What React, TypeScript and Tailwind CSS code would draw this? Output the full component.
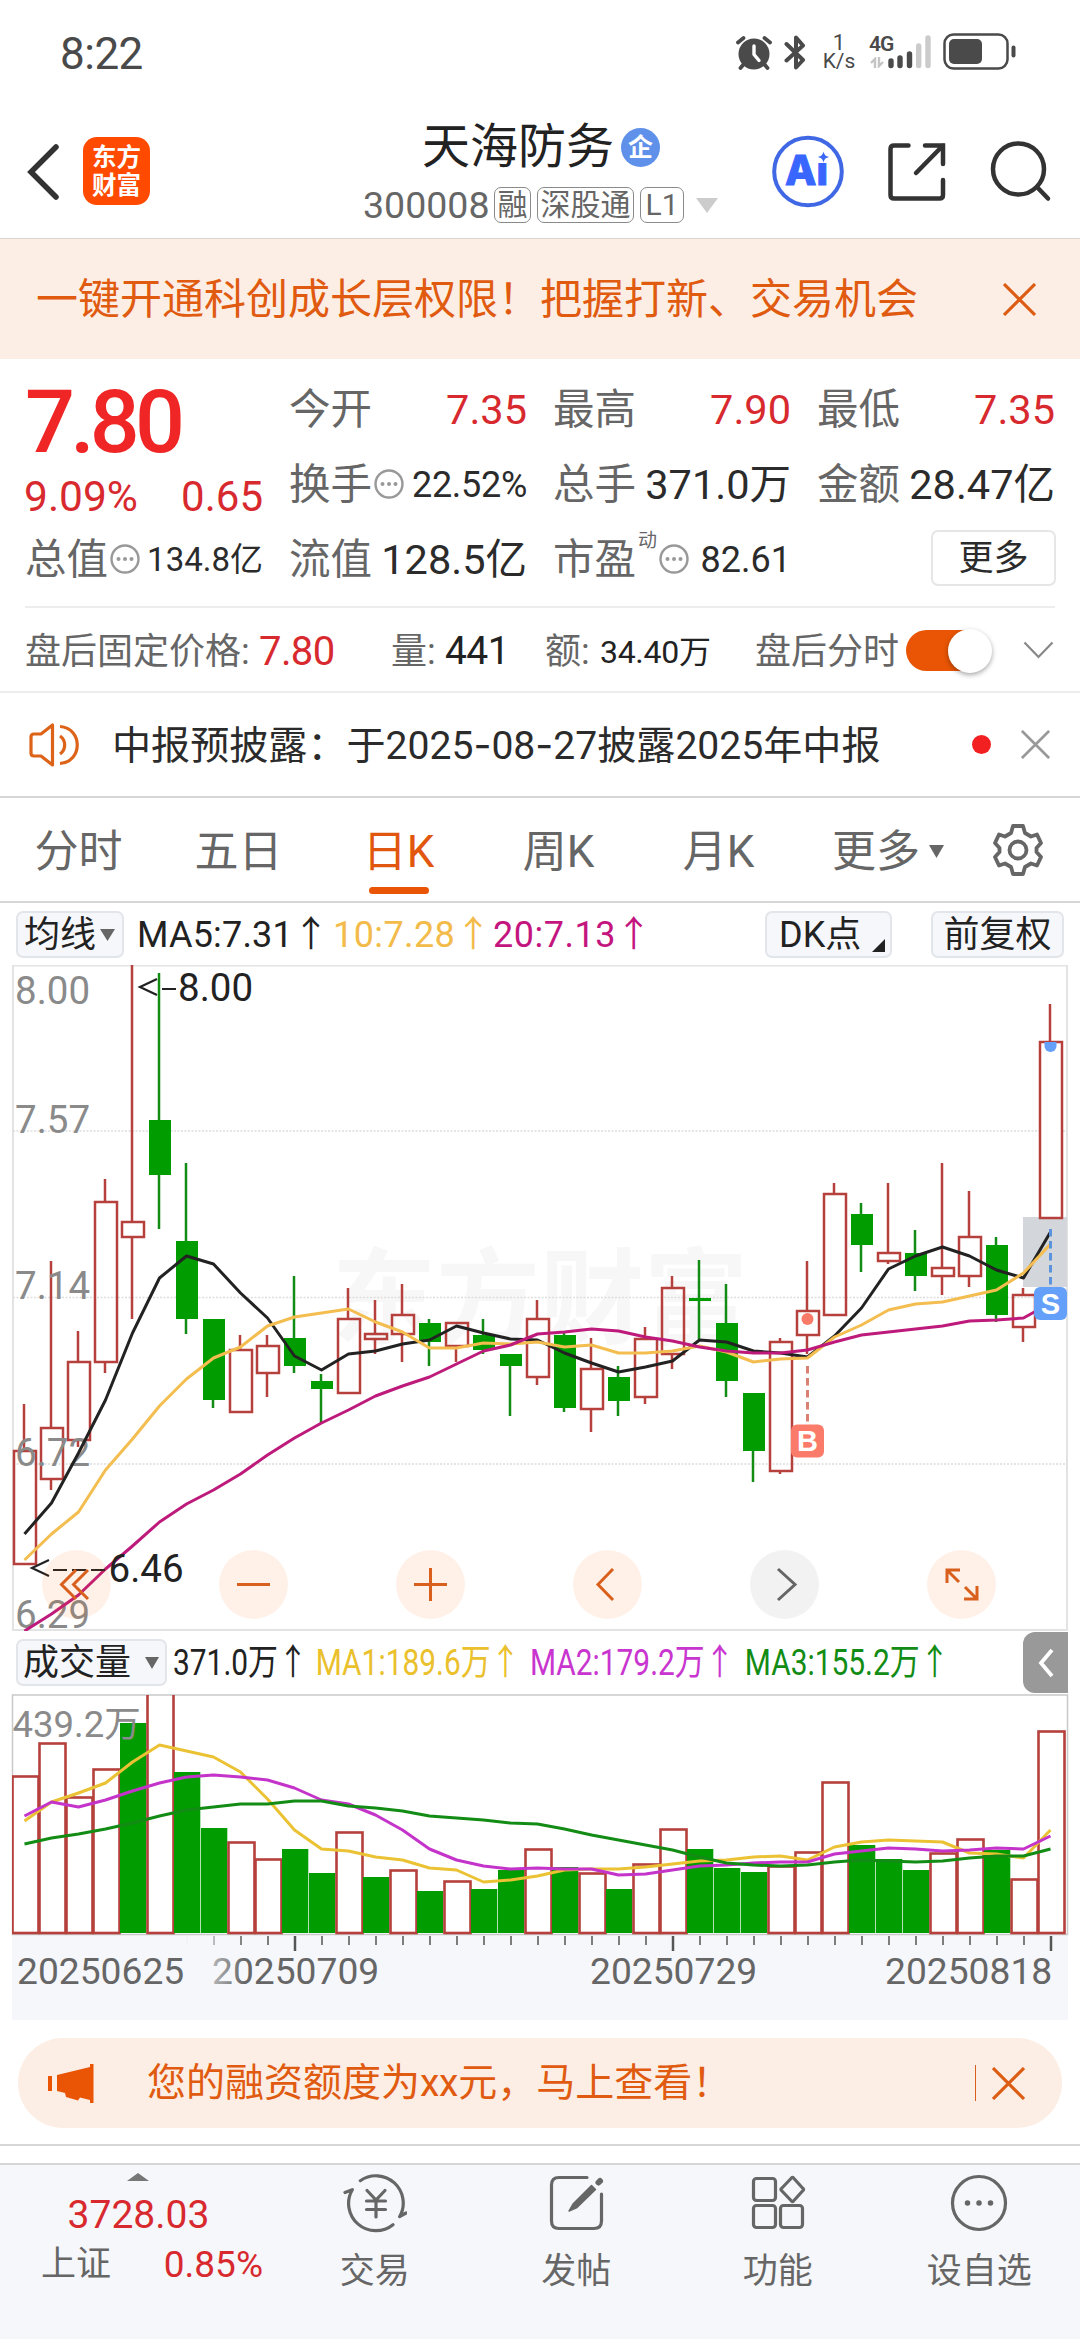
import type { ReactNode } from "react";

const STEP = 27;
const FIRST_X = 24;
const cx = (i: number) => FIRST_X + STEP * i;

// [up, high, bodyTop, bodyBottom, low]
const CANDLES: [number, number, number, number, number][] = [
  [1, 1405, 1452, 1565, 1565],
  [1, 1262, 1429, 1480, 1491],
  [1, 1332, 1363, 1441, 1448],
  [1, 1180, 1203, 1363, 1374],
  [1, 966, 1223, 1238, 1320],
  [0, 974, 1121, 1176, 1230],
  [0, 1164, 1242, 1320, 1335],
  [0, 1320, 1320, 1401, 1409],
  [1, 1336, 1351, 1413, 1413],
  [1, 1336, 1347, 1374, 1398],
  [0, 1277, 1339, 1367, 1374],
  [0, 1375, 1382, 1390, 1424],
  [1, 1289, 1320, 1394, 1394],
  [1, 1301, 1335, 1340, 1355],
  [1, 1285, 1316, 1335, 1363],
  [0, 1320, 1324, 1343, 1367],
  [1, 1324, 1324, 1347, 1363],
  [0, 1320, 1336, 1351, 1355],
  [0, 1355, 1355, 1367, 1417],
  [1, 1301, 1320, 1378, 1386],
  [0, 1333, 1336, 1409, 1413],
  [1, 1339, 1370, 1410, 1433],
  [0, 1367, 1378, 1402, 1417],
  [1, 1328, 1340, 1398, 1405],
  [1, 1277, 1289, 1355, 1370],
  [0, 1261, 1299, 1302, 1340],
  [0, 1285, 1324, 1382, 1398],
  [0, 1394, 1394, 1452, 1483],
  [1, 1339, 1343, 1472, 1475],
  [1, 1262, 1312, 1336, 1355],
  [1, 1184, 1195, 1316, 1316],
  [0, 1204, 1215, 1246, 1273],
  [1, 1184, 1254, 1262, 1265],
  [0, 1231, 1254, 1277, 1292],
  [1, 1164, 1269, 1277, 1296],
  [1, 1192, 1238, 1277, 1288],
  [0, 1238, 1246, 1316, 1323],
  [1, 1289, 1296, 1328, 1343],
  [1, 1005, 1043, 1219, 1219],
];

const MA5 = [
  1535, 1504, 1454, 1401, 1334, 1279, 1257, 1265, 1294, 1319, 1357, 1371, 1355, 1352, 1345, 1341, 1327, 1334, 1340, 1341,
  1354, 1364, 1373, 1368, 1362, 1341, 1343, 1352, 1354, 1358, 1337, 1309, 1270, 1257, 1248, 1257, 1271, 1279, 1233,
];
const MA10 = [
  1561, 1535, 1513, 1471, 1440, 1407, 1380, 1359, 1348, 1327, 1318, 1314, 1310, 1323, 1333, 1349, 1349, 1344, 1345, 1343,
  1348, 1346, 1354, 1354, 1352, 1347, 1353, 1363, 1360, 1359, 1338, 1326, 1311, 1305, 1303, 1297, 1291, 1274, 1245,
];
const MA20 = [
  1632, 1615, 1596, 1570, 1547, 1523, 1505, 1491, 1475, 1456, 1439, 1424, 1411, 1397, 1387, 1378, 1365, 1352, 1346, 1335,
  1333, 1330, 1332, 1338, 1342, 1348, 1352, 1354, 1354, 1351, 1343, 1336, 1333, 1330, 1327, 1322, 1321, 1319, 1304,
];

// [up, top]
const VOLUMES: [number, number][] = [
  [1, 1777], [1, 1744], [1, 1798], [1, 1770], [0, 1724], [1, 1690], [0, 1773], [0, 1829], [1, 1843], [1, 1860],
  [0, 1850], [0, 1874], [1, 1833], [0, 1878], [1, 1871], [0, 1892], [1, 1882], [0, 1890], [0, 1871], [1, 1850],
  [0, 1868], [1, 1874], [0, 1890], [1, 1865], [1, 1830], [0, 1850], [0, 1869], [0, 1873], [1, 1867], [1, 1853],
  [1, 1783], [0, 1846], [0, 1860], [0, 1871], [1, 1854], [1, 1840], [0, 1851], [1, 1880], [1, 1732],
];

const VMA1 = [
  1822, 1803, 1794, 1784, 1763, 1746, 1752, 1758, 1773, 1800, 1831, 1850, 1852, 1858, 1861, 1869, 1871, 1883, 1881, 1877,
  1871, 1870, 1870, 1868, 1865, 1862, 1861, 1858, 1857, 1861, 1848, 1843, 1841, 1842, 1843, 1854, 1855, 1859, 1831,
];
const VMA2 = [
  1817, 1803, 1808, 1801, 1792, 1784, 1778, 1776, 1778, 1781, 1789, 1801, 1805, 1816, 1831, 1850, 1861, 1867, 1870, 1869,
  1870, 1870, 1876, 1875, 1871, 1867, 1866, 1864, 1863, 1863, 1855, 1852, 1849, 1850, 1852, 1851, 1849, 1850, 1837,
];
const VMA3 = [
  1845, 1839, 1835, 1830, 1824, 1817, 1811, 1808, 1805, 1805, 1802, 1802, 1807, 1809, 1812, 1817, 1819, 1821, 1824, 1825,
  1830, 1836, 1841, 1846, 1851, 1858, 1864, 1866, 1867, 1866, 1863, 1861, 1862, 1863, 1862, 1859, 1857, 1857, 1850,
];

const pts = (ys: number[]) => ys.map((y, i) => `${cx(i) + 0.5},${y}`).join(" ");

function StatusBar() {
  return (
    <div className="flex h-[72px] items-start justify-between pl-[60px] pr-[64px] text-[#4a4a4a]">
      <span className="mt-[32px] text-[44px] leading-[44px] tracking-[-0.5px]">8:22</span>
      <div className="mt-[33px] flex h-[37px] items-center">
        <svg width="36" height="36" viewBox="0 0 36 36" fill="none" stroke="#4a4a4a" strokeLinecap="round">
          <circle cx="18" cy="20" r="15.500" fill="#4a4a4a" stroke="none" />
          <path d="M2 8.500L7.500 4M34 8.500L28.500 4M7 31L4.500 34M29 31L31.500 34" strokeWidth="3.800" />
          <path d="M18 12v8.500l5 6" stroke="#fff" strokeWidth="3.400" />
        </svg>
        <svg className="ml-[12px]" width="22" height="36" viewBox="0 0 22 36" fill="none" stroke="#4a4a4a" strokeWidth="4" strokeLinejoin="round" strokeLinecap="round">
          <path d="M2.500 26.500L19 11.500 12 3.500V14M2.500 10L19 26 12 33.500V23" />
        </svg>
        <div className="ml-[15px] flex w-[36px] flex-col items-center text-[22px] leading-[19px]">
          <span>1</span>
          <span className="text-[21px]">K/s</span>
        </div>
        <div className="ml-[12px] flex h-[36px] w-[64px]">
          <div className="flex w-[19px] flex-col">
            <span className="text-[21px] font-semibold leading-[20px] tracking-[-1px]">4G</span>
            <svg className="ml-px mt-[3px]" width="14" height="11" viewBox="0 0 14 11" fill="none" stroke="#c4c4c4" strokeWidth="2.400">
              <path d="M5 11V2L1 6M9 0V9L13 5" />
            </svg>
          </div>
          <svg width="44" height="36" viewBox="0 0 44 36" fill="none" strokeWidth="5.400" strokeLinecap="round">
            <path d="M3 27V31.500M12 24V31.500M21.500 20V31.500" stroke="#4a4a4a" />
            <path d="M30.700 12V31.500M40 4V31.500" stroke="#cbcbcb" />
          </svg>
        </div>
        <svg className="ml-[10px]" width="73" height="37" viewBox="0 0 73 37">
          <rect x="1.500" y="1.500" width="63" height="34" rx="9" fill="none" stroke="#4a4a4a" strokeWidth="2.500" />
          <rect x="6" y="6" width="33" height="25" rx="5" fill="#4a4a4a" />
          <rect x="68.500" y="12.500" width="4" height="12" rx="2" fill="#4a4a4a" />
        </svg>
      </div>
    </div>
  );
}

function Tag({ children }: { children: ReactNode }) {
  return (
    <span className="flex h-9 items-center rounded-[7px] border-[1.5px] border-[#8a8a8a] px-[2.5px] text-[30px] leading-[32px]">
      {children}
    </span>
  );
}

function Header() {
  return (
    <header className="relative flex h-[167px] items-start justify-between border-b border-[#d9d4d0] pl-[26px] pr-[28px]">
      <div className="mt-[65px] flex items-center">
        <svg width="34" height="58" viewBox="0 0 34 58" fill="none" stroke="#333" strokeWidth="5.500" strokeLinecap="round">
          <path d="M30 5L5 30 30 55" />
        </svg>
        <div className="ml-[23px] flex h-[68px] w-[67px] flex-col items-center justify-center rounded-[14px] bg-[#ff4a00] pt-px text-[24.5px] font-bold leading-[28px] text-white">
          <span>东方</span>
          <span>财富</span>
        </div>
      </div>
      <div className="absolute left-[363px] top-[47px]">
        <div className="ml-[59px] flex items-center">
          <span className="text-[48px] leading-[56px] text-[#222]">天海防务</span>
          <span className="ml-[7px] flex size-[39px] items-center justify-center rounded-full bg-[#5f90ea] text-[25px] font-bold leading-none text-white">
            企
          </span>
        </div>
        <div className="mt-[12px] flex items-center text-[#666]">
          <span className="w-[131px] text-[37.5px] leading-9">300008</span>
          <div className="flex gap-[6px]">
            <Tag>融</Tag>
            <Tag>深股通</Tag>
            <Tag><span className="px-[2px]">L1</span></Tag>
          </div>
          <svg className="ml-3" width="22" height="15" viewBox="0 0 22 15" fill="#ccc">
            <path d="M0 0h22L11 15z" />
          </svg>
        </div>
      </div>
      <div className="mt-[63px] flex items-center">
        <svg width="72" height="73" viewBox="0 0 72 73">
          <circle cx="36" cy="36.500" r="33.800" fill="#fff" stroke="#4068e4" strokeWidth="4" />
          <g fill="#3866ff" stroke="#3866ff" strokeWidth="1" fontFamily="Inter, sans-serif" fontSize="41" fontWeight="800">
            <text x="13" y="49.500" textLength="43" lengthAdjust="spacingAndGlyphs">Ai</text>
          </g>
          <path d="M43 14H57V28H43Z" fill="#fff" />
          <path d="M51.500 16.500c1 3.500 2 4.500 5.500 5.500-3.500 1-4.500 2-5.500 5.500-1-3.500-2-4.500-5.500-5.500 3.500-1 4.500-2 5.500-5.500z" fill="#3b67f2" />
        </svg>
        <svg className="ml-[42px]" width="62" height="62" viewBox="0 0 62 62" fill="none" stroke="#333" strokeWidth="4.500" strokeLinecap="round">
          <path d="M22.500 4.500H8Q4.500 4.500 4.500 8V54Q4.500 57.500 8 57.500H53.500Q57 57.500 57 54V39" />
          <path d="M39 4.500H57V23M57 4.500L30 32" />
        </svg>
        <svg className="ml-[42px]" width="62" height="64" viewBox="0 0 62 64" fill="none" stroke="#333" strokeWidth="4.500" strokeLinecap="round">
          <circle cx="28.500" cy="29" r="25.500" />
          <path d="M47 47L58 58.500" />
        </svg>
      </div>
    </header>
  );
}

function Cross({ size, color, width = 3 }: { size: number; color: string; width?: number }) {
  return (
    <svg width={size} height={size} viewBox="0 0 32 32" stroke={color} strokeWidth={width}>
      <path d="M1 1L31 31M31 1L1 31" />
    </svg>
  );
}

function InfoDot() {
  return (
    <svg width="30" height="30" viewBox="0 0 30 30" fill="#999">
      <circle cx="15" cy="15" r="13.500" fill="none" stroke="#999" strokeWidth="2.400" />
      <circle cx="8.500" cy="15" r="2" />
      <circle cx="15" cy="15" r="2" />
      <circle cx="21.500" cy="15" r="2" />
    </svg>
  );
}

function Quote({ label, value, up, info, sup, small }: { label: string; value: string; up?: boolean; info?: boolean; sup?: string; small?: string }) {
  return (
    <div className="flex h-[75px] items-center justify-between">
      <span className="flex items-center text-[41.5px] text-[#666]">
        <span className="pt-[2px]">{label}</span>
        {sup && <span className="-mt-9 ml-[2px] text-[19px]">{sup}</span>}
        {info && <span className="ml-[2px]"><InfoDot /></span>}
      </span>
      <span className={`pt-[2px] ${small ?? "text-[41.5px]"} ${up ? "text-[#d8292f]" : "text-[#2b2b2b]"}`}>{value}</span>
    </div>
  );
}

function QuotePanel() {
  return (
    <section className="mx-[25px] h-[249px] border-b-2 border-[#ededed] leading-none">
      <div className="flex h-[238px] gap-[26px] pt-[12px]">
        <div className="w-[239px]">
          <div className="h-[101px] pt-[7px] text-[88px] font-medium leading-[87px] tracking-[-4.8px] text-[#f02525]">7.80</div>
          <div className="flex h-[49px] items-center justify-between pt-px text-[42px] text-[#d8292f]">
            <span className="-ml-px text-[42.5px]">9.09%</span>
            <span>0.65</span>
          </div>
          <Quote label="总值" value="134.8亿" info small="text-[33px]" />
        </div>
        <div className="w-[239px]">
          <Quote label="今开" value="7.35" up />
          <Quote label="换手" value="22.52%" info small="text-[36px] tracking-[-0.3px]" />
          <Quote label="流值" value="128.5亿" />
        </div>
        <div className="w-[239px]">
          <Quote label="最高" value="7.90" up />
          <Quote label="总手" value="371.0万" />
          <Quote label="市盈" value="82.61" info sup="动" small="text-[36px]" />
        </div>
        <div className="w-[239px]">
          <Quote label="最低" value="7.35" up />
          <Quote label="金额" value="28.47亿" />
          <div className="-mr-px ml-auto flex h-[56px] w-[125px] translate-y-[9px] items-center justify-center rounded-[7px] border-2 border-[#e6e6e6] text-[35px] text-[#2b2b2b]">
            更多
          </div>
        </div>
      </div>
    </section>
  );
}

function AfterHours() {
  return (
    <section className="flex h-[85px] items-center border-b-2 border-[#ededed] px-[25px] pt-[4px] text-[36px] leading-none text-[#666]">
      <span className="w-[234px]">盘后固定价格:</span>
      <span className="w-[132px] text-[40px] tracking-[-0.6px] text-[#d8292f]">7.80</span>
      <span className="w-[54px]">量:</span>
      <span className="w-[100px] text-[39px] tracking-[-0.6px] text-[#222]">441</span>
      <span className="w-[55px]">额:</span>
      <span className="w-[155px] text-[32px] tracking-[-0.3px] text-[#222]">34.40万</span>
      <span className="w-[151px]">盘后分时</span>
      <span className="-mt-[2px] flex h-[41px] w-[86px] items-center justify-end rounded-full bg-gradient-to-r from-[#e95504] from-70% to-transparent to-70%">
        <span className="size-[44px] rounded-full bg-white shadow-[0_2px_5px_rgba(0,0,0,0.35)]" />
      </span>
      <svg className="-mt-[2px] ml-[31px]" width="31" height="19" viewBox="0 0 31 19" fill="none" stroke="#888" strokeWidth="2.200">
        <path d="M1.500 1.500L15.500 16 29.500 1.500" />
      </svg>
    </section>
  );
}

function Notice() {
  return (
    <section className="flex h-[105px] items-center border-b-2 border-[#d6d6d6] pl-[29px] pr-[30px] leading-none">
      <svg width="52" height="44" viewBox="0 0 52 44" fill="none" stroke="#dd6319" strokeWidth="3.200" strokeLinejoin="round">
        <path d="M23.500 2V42L12 33H5Q2 33 2 30V14Q2 11 5 11H12Z" />
        <path d="M31 13a11 11 0 0 1 0 18M31 3.500C54 5 54 39 31 40.500" />
      </svg>
      <p className="ml-[31px] pt-[2px] text-[39.1px] text-[#2b2b2b]">
        中报预披露：于2025<Dash />08<Dash />27披露2025年中报
      </p>
      <span className="ml-auto size-[19px] rounded-full bg-[#f22020]" />
      <span className="ml-[30px]">
        <Cross size={29} color="#999" />
      </span>
    </section>
  );
}

function Dash() {
  return <span className="font-['Inter']">-</span>;
}

const TABS = ["分时", "五日", "日K", "周K", "月K"];

function Tabs() {
  return (
    <nav className="flex h-[105px] items-center border-b-2 border-[#d6d6d6] text-[44px] leading-none text-[#666]">
      {TABS.map((tab) => (
        <div
          key={tab}
          className={`relative flex h-full w-[160px] items-center justify-center pr-[3px] pt-[4px] ${tab === "日K" ? "text-[#e2570f]" : ""}`}
        >
          {tab}
          {tab === "日K" && <span className="absolute bottom-[7px] h-[7px] w-[60px] rounded-full bg-[#e95504]" />}
        </div>
      ))}
      <div className="ml-[32px] flex w-[161px] items-center pt-[4px]">
        更多
        <svg className="ml-[9px]" width="15" height="13" viewBox="0 0 15 13" fill="#666">
          <path d="M0 0h15L7.500 13z" />
        </svg>
      </div>
      <svg width="50" height="52" viewBox="0 0 50 52" fill="none" stroke="#666" strokeWidth="3.800" strokeLinejoin="round">
        <path d="M20 2H30L32 9 38 12.500 44 10.500 48 19 43.500 24V28L48 33 44 41.500 38 39.500 32 43 30 50H20L18 43 12 39.500 6 41.500 2 33 6.500 28V24L2 19 6 10.500 12 12.500 18 9Z" />
        <circle cx="25" cy="26" r="8.500" />
      </svg>
    </nav>
  );
}

const chip = "flex items-center rounded-[7px] border-2 border-[#e2e5ea] bg-[#f6f7fa] text-[#222]";

function MaBar() {
  return (
    <div className="flex h-[62px] items-center pl-[16px] pr-[16px] pt-px text-[36px] leading-none">
      <div className={`${chip} h-[47px] w-[108px] pl-[6px] text-[36px]`}>
        均线
        <svg className="ml-[4px]" width="15" height="12" viewBox="0 0 15 12" fill="#666">
          <path d="M0 0h15L7.500 12z" />
        </svg>
      </div>
      <span className="ml-[13px] w-[196px] tracking-[0.2px] text-[#222]">MA5:7.31↑</span>
      <span className="w-[160px] tracking-[0.4px] text-[#f3bb4a]">10:7.28↑</span>
      <span className="tracking-[0.5px] text-[#c4157f]">20:7.13↑</span>
      <div className={`${chip} relative ml-auto h-[47px] w-[127px] pl-[12px]`}>
        DK点
        <span className="absolute bottom-[4px] right-[5px] size-[13px] bg-[#222] [clip-path:polygon(100%_0,100%_100%,0_100%)]" />
      </div>
      <div className={`${chip} ml-[39px] h-[47px] w-[133px] justify-center`}>前复权</div>
    </div>
  );
}

const CONTROLS = [
  { name: "first", d: "M34 20L19.500 34.500 34 49M46 20L31.500 34.500 46 49" },
  { name: "zoom-out", d: "M18 34.500H51" },
  { name: "zoom-in", d: "M18 34.500H51M34.500 18V51" },
  { name: "prev", d: "M40 19L25 34.500 40 50" },
  { name: "next", d: "M28 19L45 34.500 28 50" },
  { name: "expand", d: "M20 33V20H33M20 20L32 32M37 49H50V36M50 49L38 37" },
];

function KLineChart() {
  return (
    <div className="relative h-[666px]">
      <svg width="1080" height="666" viewBox="0 966 1080 666" fontFamily="Roboto, 'Noto Sans CJK SC', sans-serif">
        <text x="332" y="1337" fontSize="104" fontWeight="700" fill="#f7f7f7">东方财富</text>
        <rect x="13" y="966.500" width="1054" height="664.500" fill="none" stroke="#e3e3e3" strokeWidth="2" />
        {[1132, 1298.500, 1465].map((y) => (
          <path key={y} d={`M13 ${y}H1067`} stroke="#ddd" strokeWidth="1.500" strokeDasharray="2 1.500" />
        ))}
        <rect x="1023" y="1218" width="44" height="70" fill="#d3d7dc" />
        {CANDLES.map(([up, high, top, bottom, low], i) =>
          up ? (
            <g key={i} stroke="#b5403c" strokeWidth="2.500" fill="none">
              <path d={`M${cx(i)} ${high}V${top}M${cx(i)} ${bottom}V${low}`} />
              <rect x={cx(i) - 10} y={top} width="22" height={bottom - top} fill={i === 38 ? "#fff" : "none"} />
            </g>
          ) : (
            <g key={i} fill="#009c00">
              <path d={`M${cx(i)} ${high}V${low}`} stroke="#128c14" strokeWidth="2.500" />
              <rect x={cx(i) - 10} y={top} width="22" height={bottom - top} />
            </g>
          )
        )}
        <g fontSize="38.500" fill="#8a8a8a">
          <text x="15" y="1004.500">8.00</text>
          <text x="15" y="1133.500">7.57</text>
          <text x="15" y="1299.500">7.14</text>
          <text x="15" y="1466.500">6.72</text>
          <text x="15" y="1628.500">6.29</text>
        </g>
        <g fill="none" strokeWidth="3" strokeLinejoin="round">
          <polyline points={pts(MA5)} stroke="#222" />
          <polyline points={pts(MA10)} stroke="#f3bd50" />
          <polyline points={pts(MA20)} stroke="#bd1a7b" />
        </g>
        <g fill="none" stroke="#222" strokeWidth="2.200">
          <path d="M157 980L140 988 157 996M162 990H176" />
          <path d="M49 1561L32 1569 49 1577M53 1571H67M72 1571H86M91 1571H105" />
        </g>
        <g fontSize="38.500" fill="#222">
          <text x="178" y="1002">8.00</text>
          <text x="108.500" y="1583">6.46</text>
        </g>
        <circle cx="807.500" cy="1320" r="6" fill="#f97a68" />
        <path d="M807.500 1367V1424" stroke="#d98274" strokeWidth="3" strokeDasharray="7.500 4.500" />
        <rect x="791" y="1425.500" width="33" height="33" rx="6" fill="#fb7b6b" />
        <text x="807.500" y="1452" fontSize="29" fontWeight="700" fill="#fff" textAnchor="middle" fontFamily="Liberation Sans, sans-serif">B</text>
        <path d="M1044.500 1043h12v4a6 6 0 0 1-12 0z" fill="#64a0fa" />
        <path d="M1050.500 1230V1287" stroke="#5b93dc" strokeWidth="3" strokeDasharray="7.500 4.500" />
        <rect x="1034" y="1288" width="33" height="33" rx="6" fill="#64a0fa" />
        <text x="1050.500" y="1315" fontSize="29" fontWeight="700" fill="#fff" textAnchor="middle" fontFamily="Liberation Sans, sans-serif">S</text>
      </svg>
      <div className="absolute bottom-[12px] left-[42px] flex gap-[108px]">
        {CONTROLS.map(({ name, d }) => (
          <button
            key={name}
            aria-label={name}
            className={`size-[69px] rounded-full ${name === "next" ? "bg-black/5" : "bg-[#fa6400]/9"}`}
          >
            <svg width="69" height="69" viewBox="0 0 69 69" fill="none" strokeWidth="3" stroke={name === "next" ? "#666" : "#d9601c"}>
              <path d={d} />
            </svg>
          </button>
        ))}
      </div>
    </div>
  );
}

function VolumeBar() {
  return (
    <div className="flex h-[63px] items-center justify-between pl-[16px] pr-[12px] leading-none">
      <div className="flex items-center">
        <div className={`${chip} h-[47px] w-[151px] pl-[5px] text-[36px]`}>
          成交量
          <svg className="ml-[14px]" width="14" height="12" viewBox="0 0 14 12" fill="#666">
            <path d="M0 0h14L7 12z" />
          </svg>
        </div>
        <div className="ml-[6px] flex w-[800px] origin-left scale-x-83 pt-px text-[36px]">
          <span className="w-[172px] shrink-0 text-[#222]">371.0万↑</span>
          <span className="w-[258px] shrink-0 text-[#eac02c]">MA1:189.6万↑</span>
          <span className="w-[259px] shrink-0 text-[#c935cf]">MA2:179.2万↑</span>
          <span className="shrink-0 text-[#128c14]">MA3:155.2万↑</span>
        </div>
      </div>
      <div className="flex h-[61px] w-[45px] items-center justify-center rounded-l-[12px] bg-[#999]">
        <svg width="16" height="30" viewBox="0 0 16 30" fill="none" stroke="#fff" strokeWidth="3.800">
          <path d="M14 2L3 15 14 28" />
        </svg>
      </div>
    </div>
  );
}

function VolumeChart() {
  return (
    <svg width="1080" height="326" viewBox="0 1695 1080 326" fontFamily="Roboto, 'Noto Sans CJK SC', sans-serif">
      <defs>
        <clipPath id="volume">
          <rect x="12" y="1696" width="1056" height="240" />
        </clipPath>
        <linearGradient id="fade">
          <stop offset="0" stopColor="#f6f7fa" />
          <stop offset="1" stopColor="#f6f7fa" stopOpacity="0" />
        </linearGradient>
      </defs>
      <rect x="12" y="1936" width="1056" height="85" fill="#f6f7fa" />
      <rect x="12.500" y="1696" width="1055" height="239.500" fill="none" stroke="#c9c9c9" strokeWidth="1.500" />
      <g clipPath="url(#volume)">
        {VOLUMES.map(([up, top], i) =>
          up ? (
            <rect key={i} x={cx(i) - 11.500} y={top + 0.500} width="26" height={1933.500 - top} fill="none" stroke="#b5403c" strokeWidth="2.600" />
          ) : (
            <rect key={i} x={cx(i) - 12} y={top} width="26.300" height={1934 - top} fill="#009c00" />
          )
        )}
        <text x="12.500" y="1738" fontSize="36.500" fill="#8a8a8a">439.2万</text>
        <g fill="none" strokeWidth="3" strokeLinejoin="round">
          <polyline points={pts(VMA1)} stroke="#eac233" />
          <polyline points={pts(VMA2)} stroke="#c433ca" />
          <polyline points={pts(VMA3)} stroke="#128c14" />
        </g>
      </g>
      {VOLUMES.map((_, i) => {
        if (i < 6) return null;
        const major = i === 10 || i === 24 || i === 38;
        return <path key={i} d={`M${cx(i) + 1} 1937V${major ? 1952 : 1946}`} stroke="#555" strokeWidth={major ? 2.500 : 1.500} />;
      })}
      <g fontSize="37.200" fill="#666">
        <text x="17" y="1985">20250625</text>
        <text x="212" y="1985">20250709</text>
        <text x="590" y="1985">20250729</text>
        <text x="885" y="1985">20250818</text>
      </g>
      <rect x="185" y="1937" width="60" height="84" fill="url(#fade)" />
    </svg>
  );
}

function CreditBanner() {
  return (
    <div className="h-[126px] border-b-2 border-[#d6d6d6] pl-[18px] pr-[18px] pt-[18px]">
      <div className="flex h-[90px] items-center rounded-full bg-[#fceee4] pl-[30px] pr-[37px] leading-none text-[#e05a10]">
        <svg width="46" height="39" viewBox="0 0 46 39" fill="#e95504">
          <rect x="0" y="12" width="4" height="15" />
          <path d="M9 11L42 3V0h3.500v39H42v-3l-10-2.500-2 3-12-3.500-1-4-8-2z" />
        </svg>
        <span className="ml-[53px] text-[39px]">
          您的融资额度为<span className="tracking-[-0.3px]">xx</span>元，马上查看！
        </span>
        <span className="ml-auto h-9 w-[1.500px] bg-[#d9601c]" />
        <span className="ml-[16px]">
          <Cross size={33} color="#dd5c14" />
        </span>
      </div>
    </div>
  );
}

const NAV: { label: string; icon: ReactNode }[] = [
  {
    label: "交易",
    icon: (
      <>
        <path d="M17.300 7.700A27.300 27.300 0 0 1 56.600 43.700L63 40M50 51.700A27.300 27.300 0 0 1 9.300 16.700L2 19.500" />
        <path d="M24 17.500L33 27 42 17.500M23.500 28H42.500M23.500 36.500H42.500M33 28V44" />
      </>
    ),
  },
  {
    label: "发帖",
    icon: (
      <>
        <path d="M43 4.500H15Q7.500 4.500 7.500 12V48Q7.500 55.500 15 55.500H50Q57.500 55.500 57.500 48V21" />
        <path d="M25 38L29 31 47.500 12.500 51.500 16.500 33 34.500Z" fill="#666" strokeWidth="1.500" />
        <path d="M54.500 9.500L56 8" strokeWidth="6" />
      </>
    ),
  },
  {
    label: "功能",
    icon: (
      <>
        <rect x="7.500" y="5.500" width="22" height="22" rx="3" />
        <rect x="7.500" y="32.500" width="22" height="22" rx="3" />
        <rect x="34.500" y="32.500" width="22" height="22" rx="3" />
        <path d="M45.500 5Q46.500 4 47.500 5L57 15.500Q58 16.500 57 17.500L47.500 28Q46.500 29 45.500 28L35.500 17.500Q34.500 16.500 35.500 15.500Z" />
      </>
    ),
  },
  {
    label: "设自选",
    icon: (
      <>
        <circle cx="32" cy="30" r="26.500" />
        <path d="M20.500 30h.01M32 30h.01M43.500 30h.01" strokeWidth="5.500" />
      </>
    ),
  },
];

function BottomNav() {
  return (
    <nav className="mt-[17px] flex h-[176px] border-t-2 border-[#d6d6d6] bg-[#f6f7fa] leading-none">
      <div className="w-[274px] shrink-0">
        <svg className="ml-[127px] mt-[8px]" width="22" height="8" viewBox="0 0 22 8" fill="#777">
          <path d="M11 0L22 8H0z" />
        </svg>
        <div className="mt-[15px] pl-[3px] text-center text-[39px] text-[#d8292f]">3728.03</div>
        <div className="mt-[11px] flex justify-between pl-[41px] pr-[11px] text-[37px] text-[#d8292f]">
          <span className="pt-px text-[35px] text-[#666]">上证</span>
          <span>0.85%</span>
        </div>
      </div>
      {NAV.map(({ label, icon }) => (
        <div key={label} className="flex w-[201.500px] flex-col items-center pt-[8px] text-[35px] text-[#666]">
          <svg width="64" height="60" viewBox="0 0 64 60" fill="none" stroke="#666" strokeWidth="3.200" strokeLinecap="round" strokeLinejoin="round">
            {icon}
          </svg>
          <span className="mt-[21px]">{label}</span>
        </div>
      ))}
    </nav>
  );
}

export default function App() {
  return (
    <div className="flex h-[2340px] w-[1080px] flex-col overflow-hidden bg-white font-[Roboto,'Noto_Sans_CJK_SC',sans-serif]">
      <StatusBar />
      <Header />
      <div className="flex h-[120px] items-center justify-between bg-[#fceee4] pl-[36px] pr-[44px]">
        <span className="pt-[2px] text-[42px] leading-none text-[#e05a10]">一键开通科创成长层权限！把握打新、交易机会</span>
        <Cross size={33} color="#dd5c14" />
      </div>
      <QuotePanel />
      <AfterHours />
      <Notice />
      <Tabs />
      <MaBar />
      <KLineChart />
      <VolumeBar />
      <VolumeChart />
      <CreditBanner />
      <BottomNav />
    </div>
  );
}
